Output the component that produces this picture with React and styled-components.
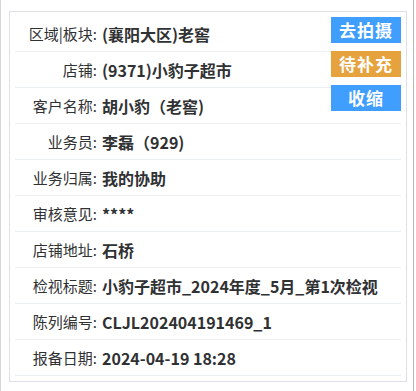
import React from "react";
import styled, { createGlobalStyle } from "styled-components";

const Global = createGlobalStyle`
  html, body { margin: 0; padding: 0; background: #fff; }
  body { font-family: "Noto Sans CJK SC", "Noto Sans", sans-serif; color: #303133; }
`;

const Page = styled.div`
  position: relative;
  width: 416px;
  height: 391px;
  box-sizing: border-box;
  padding: 11px 0 0 9px;
  border-left: 1px solid #d6d6d6;
  &::after {
    content: "";
    position: absolute;
    top: 0;
    bottom: 0;
    left: 412px;
    width: 1px;
    background: #b8b8b8;
  }
`;

const Card = styled.div`
  position: relative;
  box-sizing: border-box;
  width: 398px;
  border: 1px solid #dcdfe6;
  padding: 4px 5px 5px;
  margin-left: -1px;
`;

const Row = styled.div`
  display: grid;
  grid-template-columns: 82px 1fr;
  align-items: center;
  height: 35px;
  border-bottom: 1px solid #ebeef5;
  line-height: 20px;
  white-space: nowrap;
`;

const Label = styled.span`
  text-align: right;
  font-size: 15px;
  font-weight: 400;
  color: #303133;
`;

const Value = styled.span`
  padding-left: 5px;
  font-size: 16px;
  font-weight: 700;
  color: #303133;
`;

const Actions = styled.div`
  position: absolute;
  top: 5px;
  right: 5px;
  display: flex;
  flex-direction: column;
  gap: 8px;
`;

const ActionButton = styled.button`
  width: 70px;
  height: 26px;
  border: none;
  padding: 0;
  margin: 0;
  background: ${(p) => (p.$tone === "warn" ? "#e6a23c" : "#409eff")};
  color: #fff;
  font-family: "Noto Sans CJK SC", sans-serif;
  font-size: 17px;
  font-weight: 700;
  letter-spacing: 1px;
  line-height: 26px;
  cursor: pointer;
`;

const rows = [
  ["区域|板块:", "(襄阳大区)老窖"],
  ["店铺:", "(9371)小豹子超市"],
  ["客户名称:", "胡小豹（老窖)"],
  ["业务员:", "李磊（929)"],
  ["业务归属:", "我的协助"],
  ["审核意见:", "****"],
  ["店铺地址:", "石桥"],
  ["检视标题:", "小豹子超市_2024年度_5月_第1次检视"],
  ["陈列编号:", "CLJL202404191469_1"],
  ["报备日期:", "2024-04-19 18:28"],
];

export default function App() {
  return (
    <>
      <Global />
      <Page>
        <Card>
          {rows.map(([l, v]) => (
            <Row key={l}>
              <Label>{l}</Label>
              <Value>{v}</Value>
            </Row>
          ))}
          <Actions>
            <ActionButton>去拍摄</ActionButton>
            <ActionButton $tone="warn">待补充</ActionButton>
            <ActionButton>收缩</ActionButton>
          </Actions>
        </Card>
      </Page>
    </>
  );
}
